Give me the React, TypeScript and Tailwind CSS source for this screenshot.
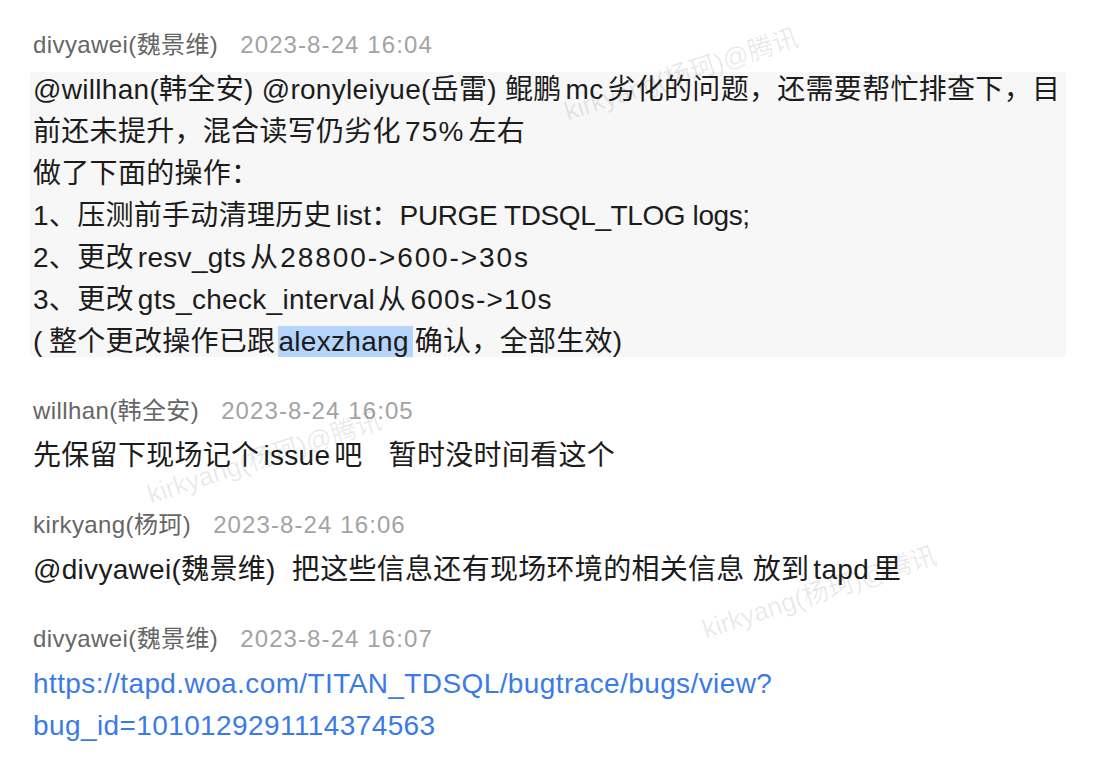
const FONT = { fontFamily: '"Liberation Sans", "Noto Sans CJK SC", sans-serif' };

// small gap the reference puts between Chinese and Latin runs
function Gap({ w = "w-[4px]" }: { w?: string }) {
  return <span className={`inline-block ${w}`} />;
}

function Header({ name, time }: { name: string; time: string }) {
  return (
    <div className="flex h-[32px] items-center text-[24px] leading-[32px] whitespace-nowrap">
      <span className="tracking-[0.4px] text-[#666666]">{name}</span>
      <span className="ml-[22px] tracking-[1.1px] text-[#a3a3a3]">{time}</span>
    </div>
  );
}

function Watermark({ className }: { className: string }) {
  return (
    <span
      className={`pointer-events-none absolute origin-left rotate-[-18deg] whitespace-nowrap text-[26px] leading-[26px] text-[rgba(0,0,0,0.09)] ${className}`}
    >
      kirkyang(杨珂)@腾讯
    </span>
  );
}

export default function App() {
  return (
    <div className="relative h-[764px] w-[1100px] overflow-hidden bg-white" style={FONT}>
      <div className="flex flex-col gap-[32px] pl-[33px] pt-[29px] text-[#1c1c1c]">
        <div className="flex flex-col">
          <Header name="divyawei(魏景维)" time="2023-8-24 16:04" />
          <div className="-ml-[3px] mb-[6px] mr-[34px] mt-[11px] rounded-[4px] bg-[#f7f7f7] pl-[3px]">
            <div className="-mb-[6px] -mt-[3px] whitespace-nowrap text-[28px] leading-[42px] tracking-[0.3px]">
              <div>
                @willhan(韩全安) @ronyleiyue(岳雷) 鲲鹏<Gap />mc<Gap />劣化的问题，还需要帮忙排查下，目
              </div>
              <div>
                前还未提升，混合读写仍劣化<Gap />
                <span className="tracking-[1.2px]">75%</span>
                <Gap />左右
              </div>
              <div>做了下面的操作：</div>
              <div>
                1、压测前手动清理历史<Gap />list：
                <span className="tracking-[-0.4px]">PURGE TDSQL_TLOG logs;</span>
              </div>
              <div>
                2、更改<Gap />resv_gts<Gap />从<Gap w="w-[2px]" />
                <span className="tracking-[1.9px]">28800-&gt;600-&gt;30s</span>
              </div>
              <div>
                3、更改<Gap />gts_check_interval<Gap w="w-[3px]" />从<Gap />
                <span className="tracking-[1.2px]">600s-&gt;10s</span>
              </div>
              <div>
                <span className="inline-block w-[16px]">(</span>整个更改操作已跟<Gap w="w-[3px]" />
                <span className="bg-[#b4d4fb] pr-[4px]">alexzhang</span>
                <Gap w="w-[2px]" />确认，全部生效)
              </div>
            </div>
          </div>
        </div>

        <div className="flex flex-col">
          <Header name="willhan(韩全安)" time="2023-8-24 16:05" />
          <div className="mt-[8px] whitespace-nowrap text-[28px] leading-[42px] tracking-[0.3px]">
            先保留下现场记个<Gap />issue<Gap />吧<Gap w="w-[26px]" />暂时没时间看这个
          </div>
        </div>

        <div className="flex flex-col">
          <Header name="kirkyang(杨珂)" time="2023-8-24 16:06" />
          <div className="mt-[8px] whitespace-nowrap text-[28px] leading-[42px] tracking-[0.3px]">
            @divyawei(魏景维){"\u00a0\u00a0"}把这些信息还有现场环境的相关信息 放到<Gap />tapd<Gap />里
          </div>
        </div>

        <div className="flex flex-col">
          <Header name="divyawei(魏景维)" time="2023-8-24 16:07" />
          <div className="mt-[8px] whitespace-nowrap text-[28px] leading-[42px] tracking-[0.4px] text-[#3a7be8]">
            <div>https://tapd.woa.com/TITAN_TDSQL/bugtrace/bugs/view?</div>
            <div>bug_id=1010129291114374563</div>
          </div>
        </div>
      </div>

      <Watermark className="left-[565px] top-[99px]" />
      <Watermark className="left-[148px] top-[482px]" />
      <Watermark className="left-[703px] top-[617px]" />
    </div>
  );
}
